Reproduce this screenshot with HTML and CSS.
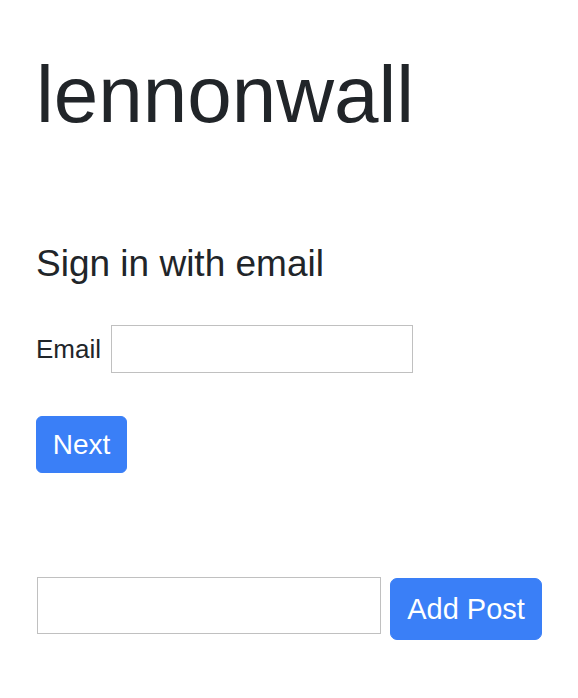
FILE: index.html
```html
<!DOCTYPE html>
<html lang="en">
<head>
<meta charset="utf-8">
<title>lennonwall</title>
<link rel="stylesheet" href="styles.css">
</head>
<body>
<main class="page">
  <h1 class="title">lennonwall</h1>
  <section class="signin">
    <h4 class="signin-heading">Sign in with email</h4>
    <form class="signin-form">
      <div class="field-row">
        <label class="field-label" for="email">Email</label>
        <input class="field-input" id="email" type="email">
      </div>
      <button class="btn btn-next" type="button">Next</button>
    </form>
  </section>
  <form class="post-form">
    <input class="post-input" type="text">
    <button class="btn btn-add" type="button">Add Post</button>
  </form>
</main>
</body>
</html>
```

FILE: styles.css
```css
html, body {
  margin: 0;
  padding: 0;
  background: #ffffff;
}

body {
  font-family: "Liberation Sans", Arial, sans-serif;
  color: #212529;
}

.page {
  padding: 55px 36px 0 36px;
}

.title {
  margin: 0;
  font-size: 80px;
  font-weight: 400;
  line-height: 80px;
}

.signin {
  margin-top: 107px;
}

.signin-heading {
  margin: 0;
  font-size: 37px;
  font-weight: 400;
  line-height: 43px;
}

.signin-form {
  margin: 40px 0 0 0;
  display: flex;
  flex-direction: column;
  align-items: flex-start;
  gap: 43px;
}

.field-row {
  display: flex;
  align-items: center;
  gap: 10px;
}

.field-label {
  font-size: 26px;
  line-height: 39px;
}

.field-input {
  box-sizing: border-box;
  width: 302px;
  height: 48px;
  margin: 0;
  padding: 0 8px;
  border: 1px solid #c0c0c0;
  border-radius: 0;
  font-family: inherit;
  font-size: 24px;
  outline: none;
}

.btn {
  box-sizing: border-box;
  margin: 0;
  border: 1px solid #3a7ff7;
  background: #3a7ff7;
  color: #ffffff;
  font-family: "Liberation Sans", Arial, sans-serif;
  font-size: 28px;
  font-weight: 400;
  cursor: pointer;
}

.btn-next {
  height: 57px;
  width: 91px;
  padding: 0;
  border-radius: 6px;
  line-height: 55px;
}

.post-form {
  margin: 104px 0 0 1px;
  display: flex;
  align-items: flex-start;
  gap: 9px;
}

.post-input {
  box-sizing: border-box;
  width: 344px;
  height: 57px;
  margin: 0;
  padding: 0 8px;
  border: 1px solid #c0c0c0;
  border-radius: 0;
  font-family: inherit;
  font-size: 24px;
  outline: none;
}

.btn-add {
  margin-top: 1px;
  width: 152px;
  height: 62px;
  padding: 0;
  border-radius: 7px;
  font-size: 29px;
  line-height: 60px;
}
```
